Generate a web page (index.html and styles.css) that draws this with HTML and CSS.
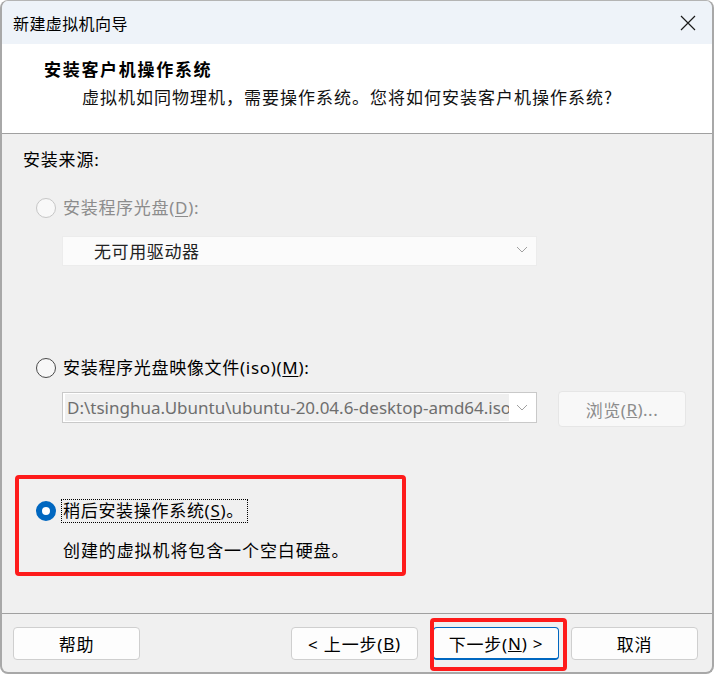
FILE: index.html
```html
<!DOCTYPE html>
<html lang="zh-CN">
<head>
<meta charset="utf-8">
<title>新建虚拟机向导</title>
<link rel="stylesheet" href="styles.css">
</head>
<body>
<div class="window">
  <div class="titlebar">
    <span class="title">新建虚拟机向导</span>
    <svg class="close" width="16" height="16" viewBox="0 0 16 16"><path d="M1 1 L15 15 M15 1 L1 15" stroke="#1a1a1a" stroke-width="1.2" fill="none"/></svg>
  </div>
  <div class="header">
    <div class="h-title">安装客户机操作系统</div>
    <div class="h-sub">虚拟机如同物理机，需要操作系统。您将如何安装客户机操作系统?</div>
  </div>
  <div class="content">
    <div class="src-label">安装来源:</div>
    <div class="options">
      <div class="opt opt1">
        <span class="radio disabled"></span>
        <span class="label dim">安装程序光盘(<u>D</u>):</span>
      </div>
      <div class="select select-disabled">
        <span class="select-text">无可用驱动器</span>
        <svg class="chev" width="12" height="8" viewBox="0 0 12 8"><polyline points="1,1 6,6 11,1" fill="none" stroke="#a0a0a0" stroke-width="1"/></svg>
      </div>
      <div class="opt opt2">
        <span class="radio"></span>
        <span class="label">安装程序光盘映像文件(iso)(<u>M</u>):</span>
      </div>
      <div class="iso-row">
        <div class="select select-iso">
          <span class="iso-text">D:\tsinghua.Ubuntu\ubuntu-20.04.6-desktop-amd64.iso</span>
          <svg class="chev" width="12" height="8" viewBox="0 0 12 8"><polyline points="1,1 6,6 11,1" fill="none" stroke="#a0a0a0" stroke-width="1"/></svg>
        </div>
        <div class="browse">浏览(<u>R</u>)...</div>
      </div>
      <div class="opt opt3">
        <span class="radio checked"></span>
        <span class="label focus">稍后安装操作系统(<u>S</u>)。</span>
      </div>
      <div class="desc">创建的虚拟机将包含一个空白硬盘。</div>
    </div>
  </div>
  <div class="footer">
    <div class="btn">帮助</div>
    <div class="spacer"></div>
    <div class="btn btn-prev">&lt; 上一步(<u>B</u>)</div>
    <div class="btn btn-next">下一步(<u>N</u>) &gt;</div>
    <div class="btn btn-cancel">取消</div>
  </div>
  <div class="mark mark-opt"></div>
  <div class="mark mark-next"></div>
</div>
</body>
</html>
```

FILE: styles.css
```css
* { box-sizing: border-box; }
html, body { margin: 0; padding: 0; background: #ffffff; }
body {
  font-family: "Noto Sans", "Noto Sans CJK SC", sans-serif;
  color: #000;
}
.window {
  position: relative;
  width: 714px;
  height: 674px;
  border: 2px solid #a8a8a8;
  border-top: 1px solid #b4b4b4;
  border-radius: 8px;
  overflow: hidden;
  background: #f0f0f0;
  display: flex;
  flex-direction: column;
}
.titlebar {
  height: 43px;
  flex: none;
  background: #eef3f9;
  display: flex;
  align-items: center;
  justify-content: space-between;
  padding: 0 16px 0 11px;
}
.title {
  font-family: "Noto Sans CJK SC", sans-serif;
  font-size: 16px;
  line-height: 22px;
  letter-spacing: 0.4px;
  margin-top: 1px;
}
.close { display: block; }
.header {
  height: 90px;
  flex: none;
  background: #ffffff;
  border-bottom: 1px solid #a0a0a0;
  padding: 13px 0 0 42px;
}
.h-title {
  font-family: "Noto Sans CJK SC", sans-serif;
  font-weight: 700;
  font-size: 17px;
  line-height: 24px;
  letter-spacing: 1.7px;
}
.h-sub {
  font-family: "Noto Sans CJK SC", sans-serif;
  font-size: 17px;
  line-height: 24px;
  letter-spacing: 1px;
  margin: 4px 0 0 38px;
  color: #111;
}
.content {
  height: 480px;
  flex: none;
  border-bottom: 1px solid #a0a0a0;
  padding: 14px 0 0 21px;
}
.src-label {
  font-size: 17px;
  line-height: 24px;
  letter-spacing: 0.8px;
}
.options { padding-left: 13px; }
.opt {
  display: flex;
  align-items: center;
  height: 24px;
}
.opt1 { margin-top: 24px; }
.opt2 { margin-top: 90px; }
.opt3 { margin-top: 72px; }
.radio {
  width: 20px;
  height: 20px;
  border-radius: 50%;
  border: 1px solid #4a4a4a;
  background: #f7f7f7;
  flex: none;
  margin-right: 7px;
}
.radio.disabled { border-color: #c6c6c6; background: #f8f8f8; }
.radio.checked { border: 6px solid #0067c0; background: #ffffff; }
.label {
  font-size: 17px;
  line-height: 22px;
  letter-spacing: 0.7px;
}
.label u { text-underline-offset: 2px; }
.dim { color: #8c8c8c; }
.focus {
  outline: 1px dotted #000;
  outline-offset: 0;
  padding-right: 3px;
  margin-left: -1px;
  padding-left: 1px;
}
.select {
  width: 475px;
  display: flex;
  align-items: center;
  justify-content: space-between;
  margin-left: 26px;
}
.select-disabled {
  height: 30px;
  margin-top: 16px;
  background: #fbfbfb;
  border: 1px solid #ececec;
  padding: 0 8px 2px 31px;
}
.select-text {
  font-family: "Noto Sans CJK SC", sans-serif;
  font-size: 17px;
  letter-spacing: 0.6px;
  color: #222;
}
.chev { display: block; flex: none; }
.iso-row {
  display: flex;
  align-items: flex-start;
  margin-top: 11px;
}
.select-iso {
  height: 31px;
  margin-top: 1px;
  background: #ffffff;
  border: 1px solid #c9c9c9;
  padding: 0 8px 0 2px;
}
.iso-text {
  display: block;
  width: 444px;
  height: 27px;
  line-height: 27px;
  overflow: hidden;
  white-space: nowrap;
  background: #efefef;
  color: #6e6e6e;
  font-family: "Noto Sans", sans-serif;
  font-size: 17px;
  letter-spacing: 0;
  padding-left: 2px;
}
.browse {
  width: 128px;
  height: 36px;
  margin-left: 21px;
  background: #f8f8f8;
  border: 1px solid #e6e6e6;
  border-radius: 4px;
  display: flex;
  align-items: center;
  justify-content: center;
  color: #8c8c8c;
  font-size: 17px;
  letter-spacing: 0.5px;
}
.desc {
  margin: 15px 0 0 27px;
  font-family: "Noto Sans CJK SC", sans-serif;
  font-size: 17px;
  line-height: 24px;
  letter-spacing: 0.9px;
}
.footer {
  flex: 1;
  display: flex;
  align-items: flex-start;
  padding: 13px 14px 0 11px;
}
.spacer { flex: 1; }
.btn {
  width: 127px;
  height: 33px;
  border: 1px solid #cfcfcf;
  border-radius: 4px;
  background: #fdfdfd;
  display: flex;
  align-items: center;
  justify-content: center;
  font-size: 17px;
  letter-spacing: 0.8px;
  flex: none;
}
.btn-next {
  margin-left: 15px;
  width: 126px;
  border: 1px solid #0067c0;
  border-bottom-width: 2px;
}
.btn-cancel { margin-left: 12px; }
.mark {
  position: absolute;
  border: 4px solid #fe1b1b;
  border-radius: 4px;
  pointer-events: none;
}
.mark-opt { left: 13px; top: 474px; width: 391px; height: 101px; }
.mark-next { left: 428px; top: 617px; width: 137px; height: 53px; }
```
